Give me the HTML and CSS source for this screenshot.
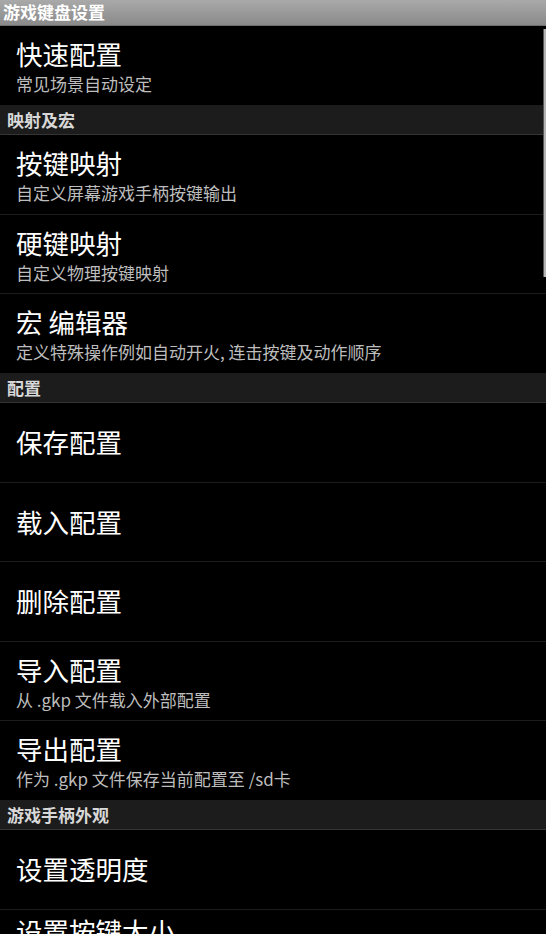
FILE: index.html
```html
<!DOCTYPE html>
<html lang="zh-CN">
<head>
<meta charset="utf-8">
<title>游戏键盘设置</title>
<link rel="stylesheet" href="styles.css">
</head>
<body>
<div class="titlebar">游戏键盘设置</div>
<div class="list">
  <div class="row two"><div class="t">快速配置</div><div class="s">常见场景自动设定</div></div>
  <div class="header">映射及宏</div>
  <div class="row two"><div class="t">按键映射</div><div class="s">自定义屏幕游戏手柄按键输出</div></div>
  <div class="row two"><div class="t">硬键映射</div><div class="s">自定义物理按键映射</div></div>
  <div class="row two"><div class="t">宏 编辑器</div><div class="s">定义特殊操作例如自动开火, 连击按键及动作顺序</div></div>
  <div class="header">配置</div>
  <div class="row"><div class="t">保存配置</div></div>
  <div class="row"><div class="t">载入配置</div></div>
  <div class="row"><div class="t">删除配置</div></div>
  <div class="row two"><div class="t">导入配置</div><div class="s">从 .gkp 文件载入外部配置</div></div>
  <div class="row two"><div class="t">导出配置</div><div class="s">作为 .gkp 文件保存当前配置至 /sd卡</div></div>
  <div class="header">游戏手柄外观</div>
  <div class="row"><div class="t">设置透明度</div></div>
  <div class="row top"><div class="t">设置按键大小</div></div>
</div>
<div class="scrollbar"></div>
</body>
</html>
```

FILE: styles.css
```css
html, body {
  margin: 0;
  padding: 0;
  background: #000;
}
body {
  font-family: "Noto Sans CJK SC", "Noto Sans", sans-serif;
  color: #fff;
  position: relative;
  height: 934px;
  overflow: hidden;
}
.titlebar {
  height: 26px;
  box-sizing: border-box;
  padding-left: 3px;
  background: linear-gradient(#a9a9a9, #8a8a8a);
  color: #fff;
  font-size: 17px;
  font-weight: bold;
  line-height: 24px;
  border-bottom: 1px solid #6e6e6e;
}
.list {
  display: flex;
  flex-direction: column;
}
.header {
  height: 29.5px;
  box-sizing: border-box;
  background: #1c1c1c;
  border-bottom: 1px solid #343434;
  padding-left: 7px;
  color: #d8d8d8;
  font-size: 17px;
  font-weight: bold;
  line-height: 28px;
}
.row {
  height: 79.5px;
  flex-shrink: 0;
  box-sizing: border-box;
  border-bottom: 1px solid #1c1c1c;
  padding-left: 16px;
  display: flex;
  flex-direction: column;
  justify-content: center;
}
.row.two {
  padding-top: 5px;
}
.row.top {
  justify-content: flex-start;
  padding-top: 6px;
}
.t {
  font-size: 26.5px;
  line-height: 30px;
  color: #fff;
  white-space: nowrap;
}
.s {
  font-size: 17px;
  line-height: 24px;
  margin-top: 3px;
  color: #bdbdbd;
  white-space: nowrap;
}
.scrollbar {
  position: absolute;
  top: 29px;
  right: 0;
  width: 2px;
  height: 248px;
  background: #b4b4b4;
  border-left: 1px solid #555;
}
```
